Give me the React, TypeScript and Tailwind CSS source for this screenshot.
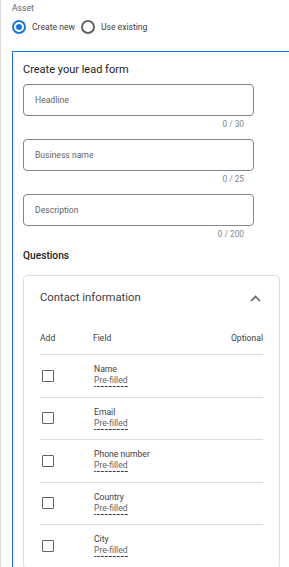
import React from "react";

const fields = [
  { label: "Headline", max: 30 },
  { label: "Business name", max: 25 },
  { label: "Description", max: 200 },
];

const rows = ["Name", "Email", "Phone number", "Country", "City"];

export default function App() {
  return (
    <div
      className="w-[289px] h-[567px] overflow-hidden bg-white border-l border-[#dadce0] pl-[11px]"
      style={{ fontFamily: "Roboto, 'Liberation Sans', sans-serif" }}
    >
      <div className="pt-[3px] text-[8.6px] leading-[11px] text-[#5f6368]">Asset</div>
      <div className="flex items-center mt-[6px] h-[14px] text-[8.6px] text-[#3c4043]">
        <span className="w-[14px] h-[14px] rounded-full border-2 border-[#1a73e8] flex items-center justify-center">
          <span className="w-[6px] h-[6px] rounded-full bg-[#1a73e8]" />
        </span>
        <span className="ml-[6px]">Create new</span>
        <span className="ml-[6px] w-[14px] h-[14px] rounded-full border-2 border-[#5f6368]" />
        <span className="ml-[6px]">Use existing</span>
      </div>

      <div className="mt-[17px] w-[300px] border-t border-l border-[#1a73e8] pl-[10px] pt-[11px]">
        <div className="text-[11px] leading-[14px] font-normal text-[#202124] mb-[7px]">
          Create your lead form
        </div>
        {fields.map((f) => (
          <div key={f.label} className="w-[231px]">
            <div className="h-[32px] rounded-[4px] border border-[#80868b] flex items-center pl-[11px] text-[8.6px] text-[#5f6368]">
              {f.label}
            </div>
            <div className="h-[23px] pt-[3px] pr-[10px] text-right text-[8.3px] leading-[10px] text-[#80868b]">
              0 / {f.max}
            </div>
          </div>
        ))}
        <div className="text-[10.2px] leading-[14px] font-medium text-[#202124]">Questions</div>
        <div className="mt-[12px] w-[257px] rounded-[4px] border border-[#dadce0] px-[16px] pt-[14px]">
          <div className="flex items-center justify-between h-[16px]">
            <span className="text-[11.3px] text-[#3c4043]">Contact information</span>
            <svg width="11" height="7" viewBox="0 0 11 7" className="mr-[2px] mt-[1px]">
              <path d="M1 6 L5.5 1.5 L10 6" fill="none" stroke="#5f6368" strokeWidth="1.6" />
            </svg>
          </div>
          <div className="mt-[26px] flex items-center h-[12px] text-[8.6px] text-[#3c4043]">
            <span className="w-[53px]">Add</span>
            <span className="flex-1">Field</span>
            <span>Optional</span>
          </div>
          <div className="mt-[10px] border-t border-[#dadce0]" />
          {rows.map((r) => (
            <div key={r} className="h-[42.5px] border-b border-[#dadce0] flex items-center">
              <span className="ml-[2px] w-[12px] h-[12px] rounded-[1px] border-[1.5px] border-[#5f6368]" />
              <div className="ml-[40px] flex flex-col text-[8.6px] leading-[11px]">
                <span className="text-[#3c4043]">{r}</span>
                <span className="self-start text-[#5f6368] bg-[linear-gradient(to_right,#3c4043_70%,transparent_70%)] bg-[length:4px_1px] bg-repeat-x bg-bottom pb-[1px]">
                  Pre-filled
                </span>
              </div>
            </div>
          ))}
        </div>
      </div>
    </div>
  );
}
